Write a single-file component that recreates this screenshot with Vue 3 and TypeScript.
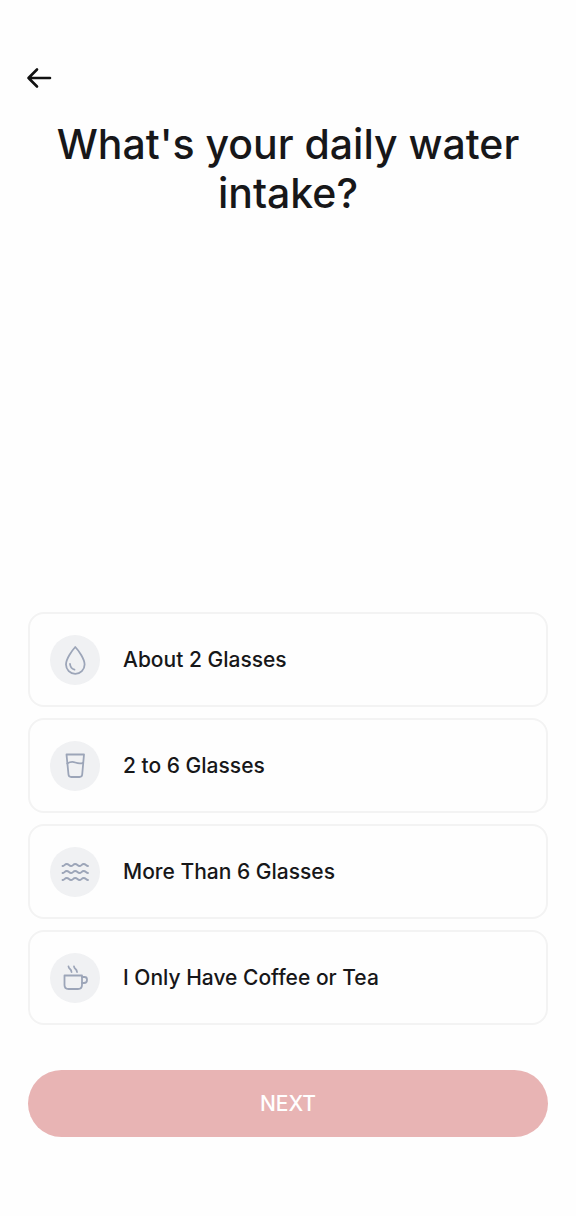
<script setup lang="ts">
import { ref } from 'vue'

type IconName = 'drop' | 'glass' | 'waves' | 'cup'

interface IntakeOption {
  value: string
  label: string
  icon: IconName
}

const options: IntakeOption[] = [
  { value: 'about-2', label: 'About 2 Glasses', icon: 'drop' },
  { value: '2-to-6', label: '2 to 6 Glasses', icon: 'glass' },
  { value: 'more-than-6', label: 'More Than 6 Glasses', icon: 'waves' },
  { value: 'coffee-tea', label: 'I Only Have Coffee or Tea', icon: 'cup' },
]

const selected = ref<string>('')
</script>

<template>
  <main class="screen">
    <button class="back" type="button" aria-label="Back">
      <svg viewBox="0 0 26 22" aria-hidden="true">
        <path d="M24 11H2.5M11 2.5L2.5 11L11 19.5" />
      </svg>
    </button>

    <h1 id="question" class="title">What's your daily water intake?</h1>

    <form class="form" @submit.prevent>
      <div class="options" role="radiogroup" aria-labelledby="question">
        <label
          v-for="option in options"
          :key="option.value"
          class="card"
          :class="{ chosen: selected === option.value }"
        >
          <input v-model="selected" class="radio" type="radio" name="intake" :value="option.value" />
          <span class="badge">
            <svg viewBox="0 0 50 50" aria-hidden="true">
              <template v-if="option.icon === 'drop'">
                <path d="M25.300 12C22 15.500 16 24 16 29.500A9.300 9.300 0 0 0 34.600 29.500C34.600 24 28.600 15.500 25.300 12Z" />
                <path d="M20 29C20.300 32 22 34 24.500 34.700" />
              </template>
              <template v-else-if="option.icon === 'glass'">
                <path d="M16.500 13.500H34L32.200 33.500Q32 36 29.500 36H21.200Q18.700 36 18.500 33.500Z" />
                <path d="M17.300 22.500C20.500 20.500 22.500 20.500 25.300 21.500S30.500 22.800 33 21.800" />
              </template>
              <template v-else-if="option.icon === 'waves'">
                <path
                  v-for="y in [18, 25, 32]"
                  :key="y"
                  :d="`M12.500 ${y + 1}C14.500 ${y + 1} 14.500 ${y - 1} 16.700 ${y - 1}S19 ${y + 1} 21 ${y + 1}S23 ${y - 1} 25.200 ${y - 1}S27.500 ${y + 1} 29.500 ${y + 1}S31.500 ${y - 1} 33.700 ${y - 1}S36 ${y + 1} 38 ${y + 1}`"
                />
              </template>
              <template v-else>
                <path d="M14.500 22.500H32V32Q32 36 28 36H18.500Q14.500 36 14.500 32Z" />
                <path d="M32 24H34.500Q37 24 37 26.500V27Q37 30 34 30H32" />
                <path d="M18.500 13.500Q18.700 15 20 16T21.500 19M24 13.500Q24.200 15 25.500 16T27 19" />
              </template>
            </svg>
          </span>
          <span class="label">{{ option.label }}</span>
        </label>
      </div>

      <button class="next" type="submit">NEXT</button>
    </form>
  </main>
</template>

<style>
body {
  margin: 0;
  background: #fefefe;
}
</style>

<style scoped>
.screen {
  box-sizing: border-box;
  min-height: 100vh;
  padding: 64px 28px 79px;
  display: flex;
  flex-direction: column;
  background: #fefefe;
  color: #171719;
  font-family: Inter, 'Liberation Sans', sans-serif;
}

.back {
  align-self: flex-start;
  display: flex;
  align-items: center;
  width: 28px;
  height: 28px;
  margin-left: -2px;
  padding: 0;
  border: 0;
  background: none;
  color: #111;
  cursor: pointer;
}

.back svg {
  width: 26px;
  height: 22px;
}

svg {
  display: block;
  fill: none;
  stroke: currentColor;
  stroke-width: 2.6;
  stroke-linecap: round;
  stroke-linejoin: round;
}

.title {
  margin: 28px 0 40px;
  font-size: 41px;
  font-weight: 500;
  line-height: 49px;
  text-align: center;
}

.form {
  display: flex;
  flex-direction: column;
  gap: 45px;
  margin-top: auto;
}

.options {
  display: flex;
  flex-direction: column;
  gap: 11px;
}

.card {
  position: relative;
  box-sizing: border-box;
  min-height: 95px;
  padding: 20px;
  display: flex;
  align-items: center;
  gap: 23px;
  border: 2px solid #f3f3f3;
  border-radius: 16px;
  cursor: pointer;
}

.card.chosen,
.card:focus-within {
  border-color: #e8b4b4;
}

.radio {
  position: absolute;
  inset: 0;
  width: 100%;
  height: 100%;
  margin: 0;
  opacity: 0;
  cursor: pointer;
}

.badge {
  flex: none;
  width: 50px;
  height: 50px;
  border-radius: 50%;
  background: #f0f1f3;
  color: #9ca5b8;
}

.badge svg {
  width: 50px;
  height: 50px;
  stroke-width: 1.8;
}

.label {
  font-size: 21px;
  font-weight: 500;
  line-height: 28px;
}

.next {
  min-height: 67px;
  padding: 0 24px;
  border: 0;
  border-radius: 34px;
  background: #e8b4b4;
  color: #fff;
  font-family: inherit;
  font-size: 21px;
  font-weight: 500;
  line-height: 28px;
  cursor: pointer;
}
</style>
